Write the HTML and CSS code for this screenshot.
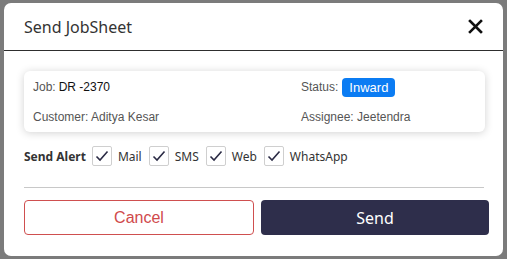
FILE: index.html
```html
<!DOCTYPE html>
<html lang="en">
<head>
    <meta charset="UTF-8">
    <meta name="viewport" content="width=device-width, initial-scale=1.0">
    <title>Send JobSheet</title>
    <link rel="stylesheet" href="styles.css">
</head>
<body>
    <div class="backdrop">
        <div class="modal">
            <div class="modal-header">
                <h2>Send JobSheet</h2>
                <button class="close-btn" aria-label="Close">
                    <svg width="15" height="15" viewBox="0 0 15 15">
                        <path d="M2 2 L13 13 M13 2 L2 13" stroke="#111" stroke-width="2.6" stroke-linecap="square"/>
                    </svg>
                </button>
            </div>

            <div class="modal-body">
                <div class="job-card">
                    <div class="job-field">Job: <span class="value">DR -2370</span></div>
                    <div class="job-field">Status: <span class="badge">Inward</span></div>
                    <div class="job-field">Customer: Aditya Kesar</div>
                    <div class="job-field">Assignee: Jeetendra</div>
                </div>

                <div class="alert-row">
                    <span class="alert-label">Send Alert</span>
                    <label class="check"><span class="box"><svg width="14" height="12" viewBox="0 0 14 12"><path d="M1.5 6.5 L5 10 L12.5 1.5" fill="none" stroke="#2b2b45" stroke-width="1.6"/></svg></span>Mail</label>
                    <label class="check"><span class="box"><svg width="14" height="12" viewBox="0 0 14 12"><path d="M1.5 6.5 L5 10 L12.5 1.5" fill="none" stroke="#2b2b45" stroke-width="1.6"/></svg></span>SMS</label>
                    <label class="check"><span class="box"><svg width="14" height="12" viewBox="0 0 14 12"><path d="M1.5 6.5 L5 10 L12.5 1.5" fill="none" stroke="#2b2b45" stroke-width="1.6"/></svg></span>Web</label>
                    <label class="check"><span class="box"><svg width="14" height="12" viewBox="0 0 14 12"><path d="M1.5 6.5 L5 10 L12.5 1.5" fill="none" stroke="#2b2b45" stroke-width="1.6"/></svg></span>WhatsApp</label>
                </div>

                <hr class="divider">

                <div class="actions">
                    <button class="btn btn-cancel">Cancel</button>
                    <button class="btn btn-send">Send</button>
                </div>
            </div>
        </div>
    </div>
</body>
</html>
```

FILE: styles.css
```css
body {
    margin: 0;
    background-color: #7b7b7b;
    font-family: 'Noto Sans', sans-serif;
    color: #333;
}

.backdrop {
    padding: 3px 4px;
    height: 259px;
    box-sizing: border-box;
}

.modal {
    background: white;
    border-radius: 7px;
    height: 253px;
    overflow: hidden;
}

.modal-header {
    display: flex;
    align-items: center;
    justify-content: space-between;
    height: 47px;
    padding: 0 20px;
    border-bottom: 1px solid #2e2e2e;
}

.modal-header h2 {
    margin: 0;
    font-size: 16px;
    font-weight: normal;
    color: #333;
}

.close-btn {
    background: none;
    border: none;
    padding: 0;
    display: flex;
    cursor: pointer;
}

.modal-body {
    padding: 20px 14px 0 20px;
}

.job-card {
    display: grid;
    grid-template-columns: 268px 1fr;
    row-gap: 10px;
    width: 461px;
    box-sizing: border-box;
    padding: 6px 9px 5px;
    border-radius: 6px;
    box-shadow: 0 1px 8px rgba(0,0,0,0.18);
    font-family: 'Liberation Sans', Arial, sans-serif;
    font-size: 12px;
    color: #555;
}

.job-field {
    display: flex;
    align-items: center;
    height: 20px;
}

.job-field .value {
    color: #111;
    margin-left: 3px;
}

.badge {
    background: #0b7cf3;
    color: white;
    font-size: 13px;
    padding: 2px 7px;
    border-radius: 4px;
    margin-left: 4px;
}

.alert-row {
    display: flex;
    align-items: center;
    margin-top: 14px;
    font-size: 12px;
}

.alert-label {
    font-weight: bold;
    margin-right: 6px;
}

.check {
    display: flex;
    align-items: center;
    margin-right: 7px;
}

.check .box {
    width: 18px;
    height: 18px;
    border: 1px solid #cfcfcf;
    border-radius: 2px;
    display: flex;
    align-items: center;
    justify-content: center;
    margin-right: 6px;
}

.divider {
    border: none;
    border-top: 1px solid #c8c8c8;
    margin: 21px 5px 12px 0;
}

.actions {
    display: flex;
    gap: 7px;
}

.btn {
    flex: 1;
    height: 35px;
    border-radius: 4px;
    font-size: 16px;
    cursor: pointer;
}

.btn-cancel {
    background: white;
    border: 1px solid #cf4f4f;
    color: #d0494b;
    font-family: 'Liberation Sans', Arial, sans-serif;
}

.btn-send {
    background: #2e2e4b;
    border: none;
    color: white;
    font-family: 'Noto Sans', sans-serif;
}
```
